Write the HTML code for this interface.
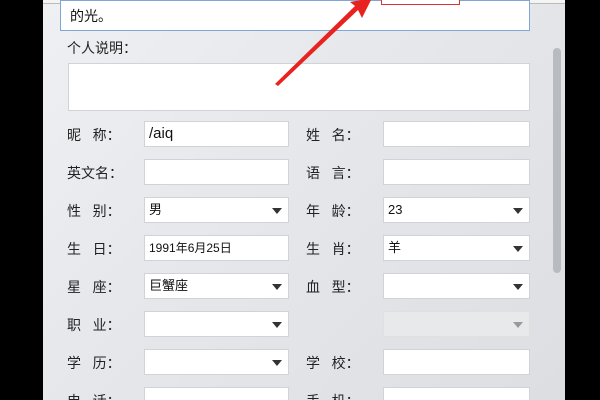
<!DOCTYPE html>
<html style="width:600px;height:400px;overflow:hidden"><head><meta charset="utf-8"><style>
html,body{margin:0;width:600px;height:400px;overflow:hidden}
body{background:#000;position:relative;font-family:"Liberation Sans","Noto Sans CJK SC",sans-serif;}
#p{position:absolute;left:43px;top:0;width:522px;height:400px;background:linear-gradient(135deg,#eef0f3 0%,#e6e8ec 40%,#dcdee2 100%);}
.b{position:absolute;background:#fff;border:1px solid #d0d3d8;box-sizing:border-box;font-size:13px;color:#111;padding-left:4px;line-height:24px;overflow:hidden}
.l{position:absolute;font-size:14px;line-height:16px;color:#222;white-space:pre;}
.ar{position:absolute;right:6px;top:10px;width:0;height:0;border-left:5px solid transparent;border-right:5px solid transparent;border-top:6px solid #333;}
</style></head><body>
<div id="p"></div>
<div style="position:absolute;left:43px;top:0;width:522px;height:3px;background:#f4f4f4;border-bottom:1px solid #bbb"></div>
<div class="b" style="left:60px;top:0;width:470px;height:31px;border:1px solid #7ea6d6;line-height:30px;padding-left:9px;font-size:14px">的光。</div>
<div style="position:absolute;left:381px;top:0;width:79px;height:5px;border:1px solid #d33;border-top:none;background:#fff;box-sizing:border-box"></div>
<div class="l" style="left:67px;top:40px">个人说明：</div>
<div class="b" style="left:68px;top:63px;width:462px;height:48px"></div>
<div style="position:absolute;left:553px;top:48px;width:8px;height:225px;background:#b8bbc0;border-radius:4px"></div>
<svg style="position:absolute;left:0;top:0" width="600" height="400"><polygon points="275,84 355,6 350,2 372,-2 362,18 358,10 278,86" fill="#e8221e"/></svg>
<div class="l" style="left:67px;top:127px">昵   称：</div><div class="b" style="left:144px;top:121px;width:145px;height:26px;font-size:15px">/aiq</div>
<div class="l" style="left:306px;top:127px">姓   名：</div><div class="b" style="left:383px;top:121px;width:147px;height:26px"></div>
<div class="l" style="left:67px;top:165px">英文名：</div><div class="b" style="left:144px;top:159px;width:145px;height:26px"></div>
<div class="l" style="left:306px;top:165px">语   言：</div><div class="b" style="left:383px;top:159px;width:147px;height:26px"></div>
<div class="l" style="left:67px;top:203px">性   别：</div><div class="b" style="left:144px;top:197px;width:145px;height:26px">男<i class="ar"></i></div>
<div class="l" style="left:306px;top:203px">年   龄：</div><div class="b" style="left:383px;top:197px;width:147px;height:26px">23<i class="ar"></i></div>
<div class="l" style="left:67px;top:241px">生   日：</div><div class="b" style="left:144px;top:235px;width:145px;height:26px;font-size:12px">1991年6月25日</div>
<div class="l" style="left:306px;top:241px">生   肖：</div><div class="b" style="left:383px;top:235px;width:147px;height:26px">羊<i class="ar"></i></div>
<div class="l" style="left:67px;top:279px">星   座：</div><div class="b" style="left:144px;top:273px;width:145px;height:26px">巨蟹座<i class="ar"></i></div>
<div class="l" style="left:306px;top:279px">血   型：</div><div class="b" style="left:383px;top:273px;width:147px;height:26px"><i class="ar"></i></div>
<div class="l" style="left:67px;top:317px">职   业：</div><div class="b" style="left:144px;top:311px;width:145px;height:26px"><i class="ar"></i></div>
<div class="b" style="left:383px;top:311px;width:147px;height:26px;background:#e8e9eb;border-color:#e0e0e0"><i class="ar" style="border-top-color:#999"></i></div>
<div class="l" style="left:67px;top:355px">学   历：</div><div class="b" style="left:144px;top:349px;width:145px;height:26px"><i class="ar"></i></div>
<div class="l" style="left:306px;top:355px">学   校：</div><div class="b" style="left:383px;top:349px;width:147px;height:26px"></div>
<div style="position:absolute;left:0;top:385px;width:600px;height:15px;overflow:hidden">
<div class="l" style="left:67px;top:8px">电   话：</div><div class="b" style="left:144px;top:2px;width:145px;height:26px"></div>
<div class="l" style="left:306px;top:8px">手   机：</div><div class="b" style="left:383px;top:2px;width:147px;height:26px"></div>
</div>
</body></html>
